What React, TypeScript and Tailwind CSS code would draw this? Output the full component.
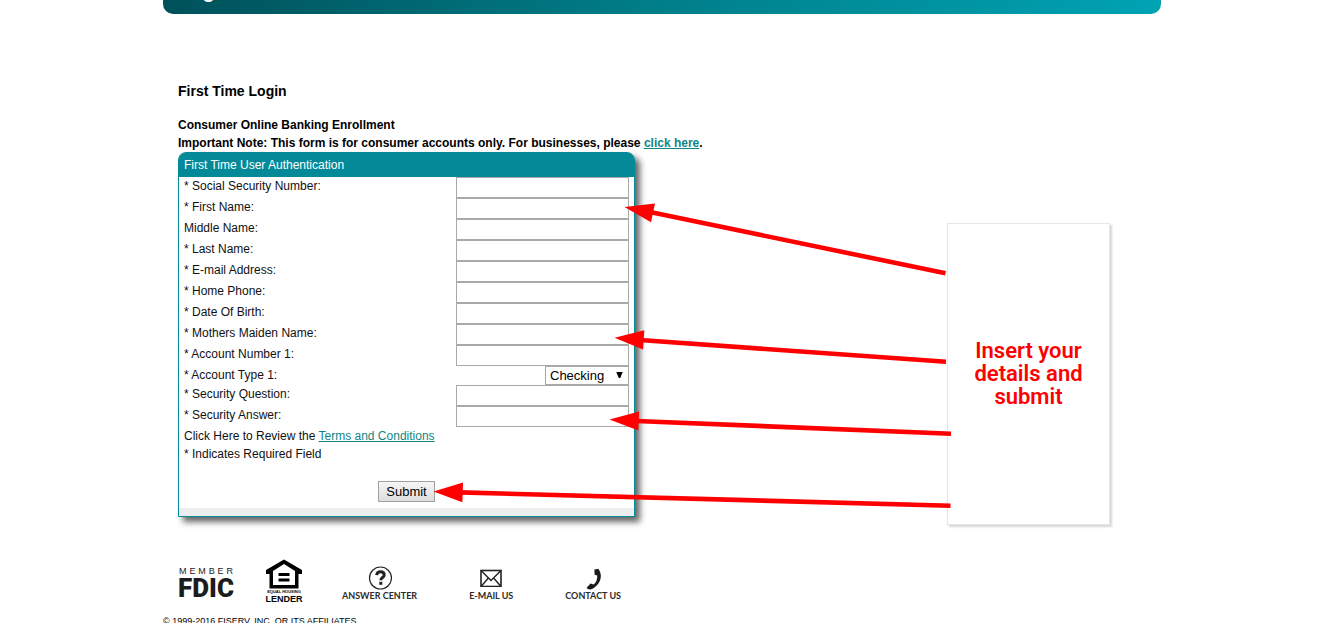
import React from "react";

const textFields = [
  { id: "ssn", label: "* Social Security Number:" },
  { id: "first-name", label: "* First Name:" },
  { id: "middle-name", label: "Middle Name:" },
  { id: "last-name", label: "* Last Name:" },
  { id: "email", label: "* E-mail Address:" },
  { id: "home-phone", label: "* Home Phone:" },
  { id: "birth-date", label: "* Date Of Birth:" },
  { id: "maiden-name", label: "* Mothers Maiden Name:" },
  { id: "account-number", label: "* Account Number 1:" },
];

const securityFields = [
  { id: "security-question", label: "* Security Question:" },
  { id: "security-answer", label: "* Security Answer:" },
];

function FieldRow({ id, label }: { id: string; label: string }) {
  return (
    <div className="flex items-start justify-between">
      <label htmlFor={id}>{label}</label>
      <input
        id={id}
        type="text"
        className="h-[21px] w-[173px] border border-[#a9a9a9] bg-white px-1 text-[13px] outline-none"
      />
    </div>
  );
}

function EnrollmentForm() {
  return (
    <form
      className="w-[457px] max-w-full rounded-t-lg border border-[#048998] bg-white shadow-[5px_5px_6px_#666666]"
      onSubmit={(e) => e.preventDefault()}
    >
      <h2 className="rounded-t-md bg-[#048998] px-[5px] pt-[3px] pb-[3px] text-white">
        First Time User Authentication
      </h2>
      <div className="px-[5px] text-[#111111]">
        {textFields.map((f) => (
          <FieldRow key={f.id} id={f.id} label={f.label} />
        ))}
        <div className="flex items-start justify-between">
          <label htmlFor="account-type">* Account Type 1:</label>
          <span className="relative flex">
            <select
              id="account-type"
              className="h-[19px] w-[84px] appearance-none border border-[#a9a9a9] bg-white pl-1 text-[13px] leading-[17px] text-black"
            >
              <option>Checking</option>
            </select>
            <svg
              className="pointer-events-none absolute top-[6px] right-[6px]"
              width="7"
              height="6"
              viewBox="0 0 7 6"
              aria-hidden="true"
            >
              <path d="M0.3 0H6.7L4.2 6H2.8Z" fill="#000" />
            </svg>
          </span>
        </div>
        {securityFields.map((f) => (
          <FieldRow key={f.id} id={f.id} label={f.label} />
        ))}
        <p>
          Click Here to Review the{" "}
          <a href="#terms" className="text-[#0f8585] underline">
            Terms and Conditions
          </a>
        </p>
        <p>* Indicates Required Field</p>
      </div>
      <div className="flex justify-center pt-[18px] pb-[6px]">
        <button
          type="submit"
          className="h-[21px] w-[57px] border border-[#a0a0a0] bg-gradient-to-b from-[#f6f6f6] to-[#dddddd] text-[13px] text-black"
        >
          Submit
        </button>
      </div>
      <div className="h-2 bg-[#eeeeee]" />
    </form>
  );
}

function Arrows() {
  return (
    <svg
      className="pointer-events-none absolute top-0 left-0"
      width="998"
      height="623"
      viewBox="163 0 998 623"
      aria-hidden="true"
    >
      <g stroke="#ff0000" strokeWidth="4.6">
        <path d="M650 212L945.5 273.3" />
        <path d="M640 340L946 361.8" />
        <path d="M636 421L951 433.7" />
        <path d="M460 492.4L950.5 505.7" />
      </g>
      <g fill="#ff0000">
        <path d="M624.5 207L655 203.4L651 222.2Z" />
        <path d="M614.5 337.7L644.3 330.2L643 349.4Z" />
        <path d="M609.5 419.5L639 411.4L638.3 430.5Z" />
        <path d="M433.5 491.5L463 482.6L462.4 502.2Z" />
      </g>
    </svg>
  );
}

function FdicLogo() {
  return (
    <div className="w-14 text-[#1c1c1c]">
      <div className="flex justify-between px-px text-[9px] leading-[9px]">
        {"MEMBER".split("").map((c, i) => (
          <span key={i}>{c}</span>
        ))}
      </div>
      <div className="font-['Roboto',sans-serif] text-[26px] leading-[24px] font-black">FDIC</div>
    </div>
  );
}

function HousingLogo() {
  return (
    <div className="flex w-9 flex-col items-center text-black">
      <svg width="36" height="30" viewBox="0 0 36 30" aria-hidden="true">
        <path
          fillRule="evenodd"
          d="M18 0.5L36 11V15H32.5V29.5H3.5V15H0V11ZM18 5L7 12V26H29V12Z"
          fill="#000"
        />
        <path d="M12.5 14H23.5V17H12.5ZM12.5 19.5H23.5V22.5H12.5Z" fill="#000" />
      </svg>
      <span className="text-[4px] leading-[6px] font-bold whitespace-nowrap">EQUAL HOUSING</span>
      <span className="text-[9px] leading-[8px] font-bold">LENDER</span>
    </div>
  );
}

function FooterLink({ href, label, children }: { href: string; label: string; children: React.ReactNode }) {
  return (
    <a
      href={href}
      className="flex flex-col items-center font-['Lato',sans-serif] text-[9px] leading-3 font-bold whitespace-nowrap text-[#2b2b2b]"
    >
      <span className="flex h-6 items-center">{children}</span>
      {label}
    </a>
  );
}

export default function App() {
  return (
    <div className="h-screen overflow-hidden bg-white pr-2 font-['Liberation_Sans',Arial,sans-serif] text-[12px] leading-[18px] text-black">
      <div className="relative mx-auto max-w-[998px]">
        <header className="flex h-[14px] items-end overflow-hidden rounded-b-[10px] bg-linear-to-r from-[#00515a] via-[#007f8a] to-[#00a3b4] px-[15px] pb-[12px]">
          <span className="text-[20px] leading-[22px] font-bold text-white">Login</span>
        </header>

        <main className="px-[15px] pt-[68px]">
          <h1 className="text-[14px] leading-[18px] font-bold">First Time Login</h1>
          <div className="pt-4 font-bold">
            <p>Consumer Online Banking Enrollment</p>
            <p>
              Important Note: This form is for consumer accounts only. For businesses, please{" "}
              <a href="#business" className="text-[#0f8585] underline">
                click here
              </a>
              .
            </p>
          </div>
          <EnrollmentForm />
        </main>

        <footer>
          <div className="flex items-start pt-[42px] pl-[15px]">
            <div className="pt-2">
              <FdicLogo />
            </div>
            <div className="pl-8">
              <HousingLogo />
            </div>
            <nav className="flex gap-[52px] pt-[7px] pl-10">
              <FooterLink href="#answers" label="ANSWER CENTER">
                <svg width="24" height="24" viewBox="0 0 24 24" aria-hidden="true">
                  <circle cx="12.5" cy="12" r="11" fill="none" stroke="#222" strokeWidth="1.2" />
                  <path
                    d="M8.7 9.2C8.9 6.8 10.5 5.8 12.5 5.8C14.7 5.8 16.2 7 16.2 8.9C16.2 11.6 12.8 11.5 12.8 14.3"
                    fill="none"
                    stroke="#222"
                    strokeWidth="3"
                  />
                  <rect x="11.3" y="15.8" width="3" height="3" fill="#222" />
                </svg>
              </FooterLink>
              <FooterLink href="#email" label="E-MAIL US">
                <svg width="22" height="18" viewBox="0 0 22 18" fill="none" stroke="#222" aria-hidden="true">
                  <rect x="1" y="1.5" width="20" height="16" strokeWidth="1.6" />
                  <path d="M1 1.5L11 11.5L21 1.5M1 17.5L8.4 9M21 17.5L13.6 9" strokeWidth="1.4" />
                </svg>
              </FooterLink>
              <FooterLink href="#contact" label="CONTACT US">
                <svg className="translate-x-px translate-y-px" width="16" height="22" viewBox="0 0 16 22" aria-hidden="true">
                  <path
                    d="M8.4 1.6L12.3 0.8C17 6.6 15.2 15.8 6.6 20.8C4.6 21.8 1.6 21.6 0.6 19.8L4.6 15.6L7.6 16.6C10.4 14.4 11.4 11.6 11.2 7.6L8.6 6.8Z"
                    fill="#1a1a1a"
                  />
                </svg>
              </FooterLink>
            </nav>
          </div>
          <p className="pt-[12px] text-[9px] leading-3">© 1999-2016 FISERV, INC. OR ITS AFFILIATES.</p>
        </footer>

        <aside className="absolute top-[223px] left-[784px] flex h-[302px] w-[163px] items-center justify-center border border-[#e6e6e6] bg-white px-5 pb-[2px] text-center font-['Roboto',sans-serif] text-[22px] leading-[23px] font-semibold text-[#ff0000] shadow-[2px_2px_2px_#d6d6d6]">
          Insert your details and submit
        </aside>
        <Arrows />
      </div>
    </div>
  );
}
